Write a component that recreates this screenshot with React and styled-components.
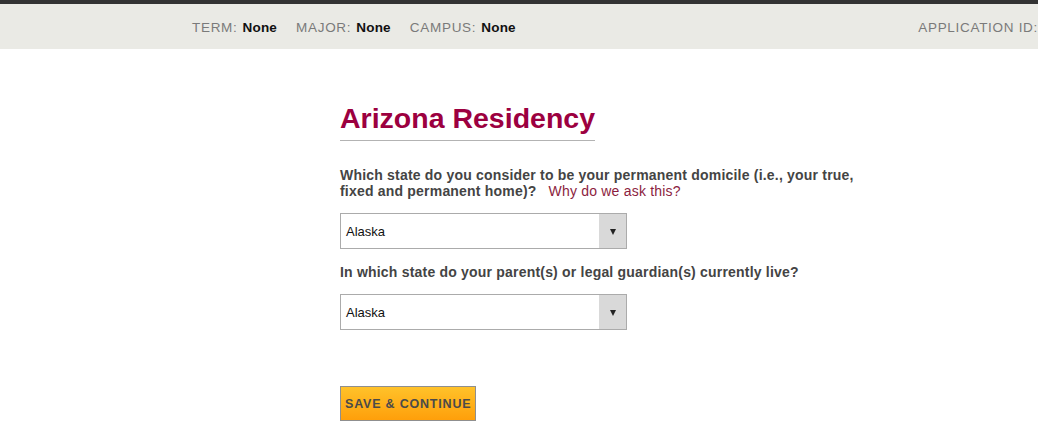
import React from "react";
import styled, { createGlobalStyle } from "styled-components";

const GlobalStyle = createGlobalStyle`
  html, body {
    margin: 0;
    padding: 0;
    background: #fff;
    font-family: "Liberation Sans", Arial, sans-serif;
  }
`;

const Page = styled.div`
  width: 1038px;
  height: 427px;
  overflow: hidden;
  border-top: 4px solid #333333;
`;

const InfoBar = styled.div`
  height: 45px;
  background: #eaeae5;
  display: flex;
  align-items: center;
  padding-left: 192px;
  padding-top: 1px;
  box-sizing: border-box;
  white-space: nowrap;
  overflow: hidden;
`;

const InfoItem = styled.div`
  font-size: 13.5px;
  margin-right: 19px;
  &:last-child {
    margin-left: auto;
    margin-right: 0;
  }
`;

const InfoLabel = styled.span`
  color: #7a7a7a;
  letter-spacing: 0.7px;
  margin-right: ${(props) => (props.$gap ? "5px" : "0")};
`;

const InfoValue = styled.span`
  color: #111;
  font-weight: bold;
  letter-spacing: 0.2px;
`;

const Main = styled.main`
  width: 540px;
  margin-left: 340px;
  padding-top: 52px;
`;

const Title = styled.h1`
  display: inline-block;
  margin: 0 0 26px 0;
  padding-bottom: 5px;
  border-bottom: 1px solid #b3b3b3;
  color: #9c0040;
  font-size: 28.5px;
  line-height: 34px;
  font-weight: bold;
`;

const Question = styled.label`
  display: block;
  color: #444;
  font-size: 14px;
  font-weight: bold;
  letter-spacing: 0.2px;
  line-height: 16px;
  margin-bottom: 14px;
`;

const Why = styled.a`
  color: #8c1d40;
  font-weight: normal;
  text-decoration: none;
  margin-left: 12px;
`;

const SelectBox = styled.div`
  width: 285px;
  height: 34px;
  border: 1px solid #ababab;
  display: flex;
  align-items: stretch;
  margin-bottom: 15px;
  background: #fff;
`;

const SelectValue = styled.div`
  flex: 1;
  display: flex;
  align-items: center;
  padding-left: 5px;
  font-size: 13px;
  color: #111;
`;

const Arrow = styled.div`
  width: 27px;
  background: #d9d9d9;
  display: flex;
  align-items: center;
  justify-content: center;
  &::after {
    content: "";
    border-left: 3.5px solid transparent;
    border-right: 3.5px solid transparent;
    border-top: 6px solid #222;
    margin-top: 2px;
  }
`;

const Button = styled.button`
  margin-top: 41px;
  height: 35px;
  padding: 0 4px;
  border: 1px solid #8f8f8f;
  background: linear-gradient(#ffc22a, #ff9f0a);
  color: #4a4a4a;
  font-family: "Liberation Sans", Arial, sans-serif;
  font-size: 12.5px;
  font-weight: bold;
  letter-spacing: 0.8px;
  cursor: pointer;
`;

function Select({ value }) {
  return (
    <SelectBox>
      <SelectValue>{value}</SelectValue>
      <Arrow />
    </SelectBox>
  );
}

export default function App() {
  return (
    <Page>
      <GlobalStyle />
      <InfoBar>
        <InfoItem>
          <InfoLabel $gap>TERM:</InfoLabel>
          <InfoValue>None</InfoValue>
        </InfoItem>
        <InfoItem>
          <InfoLabel $gap>MAJOR:</InfoLabel>
          <InfoValue>None</InfoValue>
        </InfoItem>
        <InfoItem>
          <InfoLabel $gap>CAMPUS:</InfoLabel>
          <InfoValue>None</InfoValue>
        </InfoItem>
        <InfoItem>
          <InfoLabel>APPLICATION ID:</InfoLabel>
        </InfoItem>
      </InfoBar>
      <Main>
        <Title>Arizona Residency</Title>
        <Question>
          Which state do you consider to be your permanent domicile (i.e., your
          true, fixed and permanent home)?
          <Why href="#">Why do we ask this?</Why>
        </Question>
        <Select value="Alaska" />
        <Question>
          In which state do your parent(s) or legal guardian(s) currently live?
        </Question>
        <Select value="Alaska" />
        <Button>SAVE &amp; CONTINUE</Button>
      </Main>
    </Page>
  );
}
